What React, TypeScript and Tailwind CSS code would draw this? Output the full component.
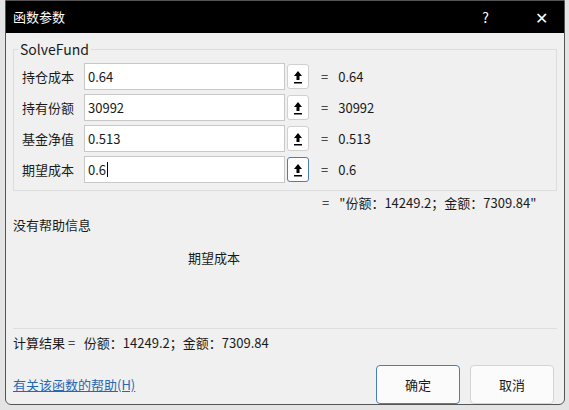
const font = { fontFamily: '"Microsoft YaHei", "Noto Sans CJK SC", "Open Sans", sans-serif' };

const rows = [
  { label: "持仓成本", value: "0.64", focused: false },
  { label: "持有份额", value: "30992", focused: false },
  { label: "基金净值", value: "0.513", focused: false },
  { label: "期望成本", value: "0.6", focused: true },
];

function PickIcon() {
  return (
    <svg width="10" height="14" viewBox="0 0 10 14">
      <path d="M5 1 L9 6 H6.5 V10 H3.5 V6 H1 Z" fill="#000" />
      <rect x="1" y="12" width="8" height="1.5" fill="#000" />
    </svg>
  );
}

export default function App() {
  return (
    <div className="relative h-[410px] w-[569px] overflow-hidden bg-[#e4e4e4] text-[13px] text-[#1a1a1a]" style={font}>
      <div className="absolute left-[5px] top-0 flex h-[405px] w-[560px] flex-col overflow-hidden rounded-b-md border border-[#555] bg-[#f0f0f0]">
        <div className="flex h-[32px] shrink-0 items-center bg-black pl-[7px] pr-[16px] text-white">
          <span className="flex-1 text-[13px]">函数参数</span>
          <span className="mr-[46px] text-[14px]">?</span>
          <span className="text-[16px] font-light">✕</span>
        </div>
        <div className="flex flex-1 flex-col px-[7px]">
          <div className="relative mt-[16px] h-[142px] border border-[#dcdcdc]">
            <span className="absolute -top-[10px] left-[4px] bg-[#f0f0f0] px-[2px] text-[14px] leading-[18px]">SolveFund</span>
            <div className="mt-[13px] flex flex-col gap-[4px] pl-[8px]">
              {rows.map((r) => (
                <div key={r.label} className="flex h-[27px] items-center">
                  <span className="w-[62px] text-[13px]">{r.label}</span>
                  <div className="flex h-[27px] w-[201px] items-center border border-[#c8c8c8] bg-white px-[3px] text-[13px]">
                    {r.value}
                    {r.focused && <span className="ml-px h-[15px] w-px bg-black" />}
                  </div>
                  <div className={`ml-[2px] flex h-[25px] w-[22px] items-center justify-center rounded-[3px] border bg-white ${r.focused ? "border-[#4a7fb5] bg-[#f2f7fb]" : "border-[#d0d0d0]"}`}>
                    <PickIcon />
                  </div>
                  <span className="ml-[12px] text-[13px]">=</span>
                  <span className="ml-[10px] text-[13px]">{r.value}</span>
                </div>
              ))}
            </div>
          </div>
          <div className="mt-[2px] pl-[309px] text-[13px]">
            <span>=</span>
            <span className="ml-[10px]">"份额：14249.2；金额：7309.84"</span>
          </div>
          <div className="mt-[2px] text-[13px]">没有帮助信息</div>
          <div className="mt-[14px] pl-[175px] text-[13px]">期望成本</div>
          <div className="mt-[60px] h-px bg-[#dedede]" />
          <div className="mt-[4px] text-[13px]">计算结果 =&nbsp;&nbsp;&nbsp;份额：14249.2；金额：7309.84</div>
          <div className="mt-[13px] flex items-center">
            <span className="flex-1 text-[13px] text-[#2468b5] underline">有关该函数的帮助(H)</span>
            <div className="flex h-[39px] w-[84px] items-center justify-center rounded-[4px] border border-[#4a7fb5] bg-[#fbfbfb] text-[13px]">确定</div>
            <div className="ml-[10px] mr-[3px] flex h-[39px] w-[84px] items-center justify-center rounded-[4px] border border-[#d4d4d4] bg-[#fbfbfb] text-[13px]">取消</div>
          </div>
        </div>
      </div>
    </div>
  );
}
